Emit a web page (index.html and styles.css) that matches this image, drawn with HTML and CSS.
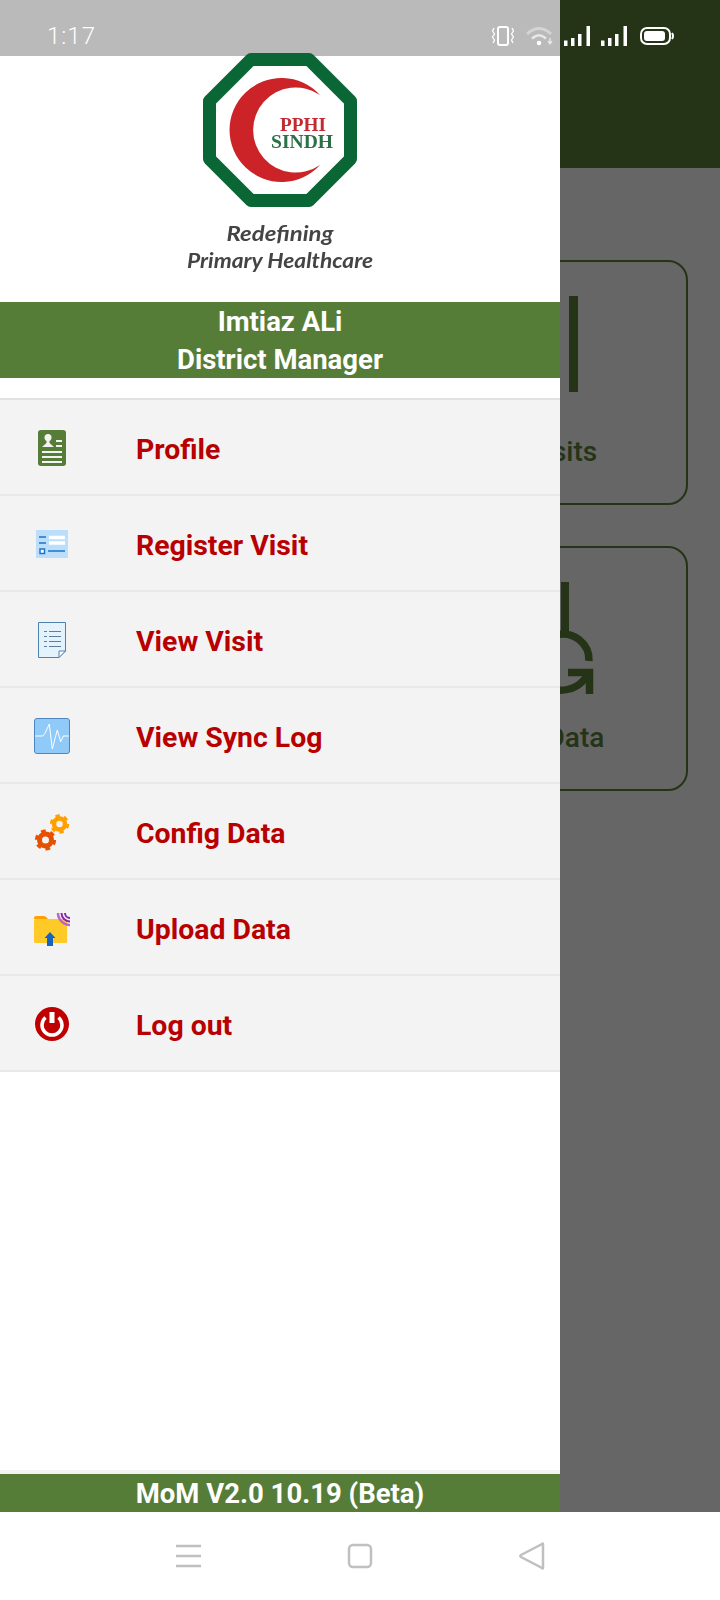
FILE: index.html
```html
<!DOCTYPE html>
<html>
<head>
    <title>MoM</title>
    <link rel="stylesheet" href="styles.css">
</head>
<body>
<div class="screen">

    <div class="app">
        <div class="app-header"></div>
        <div class="cards">
            <div class="card">
                <svg class="card-icon" viewBox="0 0 160 110"><rect x="121" y="8" width="9" height="96"/></svg>
                <div class="card-label">View Visits</div>
            </div>
            <div class="card">
                <svg class="card-icon" viewBox="0 0 160 110">
                    <rect x="113" y="8" width="8" height="50"/>
                    <path class="card-stroke" d="M108 61A26 26 0 0 1 141 87"/>
                    <path class="card-stroke" d="M120 98.500H141.500V120"/>
                    <path class="card-stroke" d="M108 116Q128 118 139 102"/>
                </svg>
                <div class="card-label">Upload Data</div>
            </div>
        </div>
    </div>

    <div class="navbar">
        <svg class="nav-icon nav-menu" viewBox="0 0 26 24"><path d="M0 2H25M0 12H25M0 22H25"/></svg>
        <svg class="nav-icon nav-home" viewBox="0 0 26 26"><rect x="2" y="2" width="22" height="22" rx="4"/></svg>
        <svg class="nav-icon nav-back" viewBox="0 0 28 28"><path d="M25 2V26Q25 27 24 26L3 15Q1.500 14 3 13L24 2Q25 1 25 2Z"/></svg>
    </div>

    <!-- drawer lies over the app -->
    <div class="drawer">
        <div class="drawer-status"></div>
        <div class="drawer-logo">
            <svg class="logo" viewBox="0 0 200 226">
                <path class="logo-ring" d="M71 6.500H129L170.500 48V106L129 147.500H71L29.500 106V48Z"/>
                <path class="logo-moon" d="M140 42A52 52 0 1 0 140 112A42.600 42.600 0 1 1 140 42Z"/>
                <text class="logo-pphi" x="123" y="78" text-anchor="middle" textLength="46" lengthAdjust="spacingAndGlyphs">PPHI</text>
                <text class="logo-sindh" x="122" y="95" text-anchor="middle" textLength="62" lengthAdjust="spacingAndGlyphs">SINDH</text>
                <text class="logo-tag" x="100" y="188" text-anchor="middle" textLength="107" lengthAdjust="spacingAndGlyphs">Redefining</text>
                <text class="logo-tag" x="100" y="215" text-anchor="middle" textLength="186" lengthAdjust="spacingAndGlyphs">Primary Healthcare</text>
            </svg>
        </div>
        <div class="user-band">
            <div>Imtiaz ALi</div>
            <div>District Manager</div>
        </div>

        <div class="menu">
            <div class="menu-item">
                <svg class="menu-icon" viewBox="0 0 40 40">
                    <rect x="6" y="3" width="28" height="36" rx="3" fill="#567d38"/>
                    <circle cx="16" cy="10.500" r="3.500" fill="#f3f3f3"/>
                    <path d="M14.500 13H17.500V16L22 20H10L14.500 16Z" fill="#f3f3f3"/>
                    <path d="M24 14H30M24 19H30M10 25H30M10 30H30M10 35H30" stroke="#f3f3f3" stroke-width="2.200" fill="none"/>
                </svg>
                <span>Profile</span>
            </div>
            <div class="menu-item">
                <svg class="menu-icon" viewBox="0 0 40 40">
                    <rect x="4" y="7" width="32" height="28" fill="#bbdefb"/>
                    <path d="M7 14H14M7 20H14M16 28H33" stroke="#1e74c8" stroke-width="1.500" fill="none"/>
                    <path d="M17 14.500H33M17 20H33" stroke="#fff" stroke-width="3.500" fill="none"/>
                    <rect x="8" y="26" width="4.500" height="4.500" fill="#fff" stroke="#1e74c8" stroke-width="1.500"/>
                </svg>
                <span>Register Visit</span>
            </div>
            <div class="menu-item">
                <svg class="menu-icon" viewBox="0 0 40 40">
                    <path d="M6.500 3.500H33.500V32L27 38.500H6.500Z" fill="#e3f2fd" stroke="#4f81b0" stroke-width="1"/>
                    <path d="M33.500 32H27V38.500Z" fill="#fff" stroke="#4f81b0" stroke-width="1"/>
                    <path d="M12 12.500H15M17 12.500H29M12 17.500H15M17 17.500H29M12 22.500H15M17 22.500H29M12 27.500H15M17 27.500H29" stroke="#5c7f9f" stroke-width="1" fill="none"/>
                </svg>
                <span>View Visit</span>
            </div>
            <div class="menu-item">
                <svg class="menu-icon" viewBox="0 0 40 40">
                    <rect x="2.500" y="3.500" width="35" height="35" rx="2.500" fill="#90caf9" stroke="#4f86bd" stroke-width="1"/>
                    <path d="M3 21H10.700L13 18.300L17.300 9L20.300 34L25.300 15L28.700 26.700L31.300 21H37" stroke="#fff" stroke-width="1" fill="none"/>
                </svg>
                <span>View Sync Log</span>
            </div>
            <div class="menu-item">
                <svg class="menu-icon" viewBox="0 0 40 40">
                    <circle cx="27.500" cy="13" r="5.500" fill="none" stroke="#ffa000" stroke-width="4.500"/>
                    <circle cx="27.500" cy="13" r="8.300" fill="none" stroke="#ffa000" stroke-width="2.800" stroke-dasharray="4.350 4.350"/>
                    <circle cx="13.500" cy="29" r="6" fill="none" stroke="#e65100" stroke-width="5"/>
                    <circle cx="13.500" cy="29" r="9.200" fill="none" stroke="#e65100" stroke-width="2.800" stroke-dasharray="4.800 4.830"/>
                </svg>
                <span>Config Data</span>
            </div>
            <div class="menu-item">
                <svg class="menu-icon" viewBox="0 0 40 40">
                    <path d="M2 11Q2 9 4 9H12Q14 9 16 12H2Z" fill="#ffa000"/>
                    <rect x="2" y="12" width="33" height="24" rx="1.500" fill="#ffca28"/>
                    <path d="M26 6A12 12 0 0 0 38 18" stroke="#ba68c8" stroke-width="2.500" fill="none"/>
                    <path d="M29.500 6A8.500 8.500 0 0 0 38 14.500M33 6A5 5 0 0 0 38 11" stroke="#8e24aa" stroke-width="2" fill="none"/>
                    <path d="M18 25L23.500 31H21V39H15V31H12.500Z" fill="#1565c0"/>
                </svg>
                <span>Upload Data</span>
            </div>
            <div class="menu-item">
                <svg class="menu-icon" viewBox="0 0 40 40">
                    <circle cx="20" cy="21" r="17" fill="#c00000"/>
                    <path d="M13.500 14.500A10 10 0 1 0 26.500 14.500" stroke="#fff" stroke-width="3.500" fill="none"/>
                    <path d="M20 9V20" stroke="#fff" stroke-width="5" fill="none"/>
                </svg>
                <span>Log out</span>
            </div>
        </div>

        <div class="version">MoM V2.0 10.19 (Beta)</div>
    </div>

    <!-- status bar runs over both drawer and app -->
    <div class="statusbar">
        <span class="clock">1:17</span>
        <div class="status-icons">
            <svg class="ic-vibrate" width="24" height="20" viewBox="0 0 24 20">
                <rect x="7" y="1" width="10" height="18" rx="2" fill="none" stroke="#fff" stroke-width="2"/>
                <path d="M3 2L1.500 5L3.500 8L1.500 11L3.500 14L2 17M21 2L22.500 5L20.500 8L22.500 11L20.500 14L22 17" fill="none" stroke="#fff" stroke-width="1.300"/>
            </svg>
            <svg class="ic-wifi" width="28" height="20" viewBox="0 0 28 20">
                <path d="M1 8Q13 -3 25 8" fill="none" stroke="#d4d4d4" stroke-width="3"/>
                <path d="M6 12.500Q13 6 20 12.500" fill="none" stroke="#e8e8e8" stroke-width="2.500"/>
                <circle cx="13" cy="17" r="2.300" fill="#fff"/>
                <path d="M24 12V17M22 15L24 18L26 15" fill="none" stroke="#eee" stroke-width="1.200"/>
            </svg>
            <svg class="ic-signal" width="27" height="20" viewBox="0 0 27 20"><path d="M0 14.500H3.500V20H0ZM7 12H10.500V20H7ZM14 8H17.500V20H14ZM22.500 0H26V20H22.500Z" fill="#fff"/></svg>
            <svg class="ic-signal" width="27" height="20" viewBox="0 0 27 20"><path d="M0 14.500H3.500V20H0ZM7 12H10.500V20H7ZM14 8H17.500V20H14ZM22.500 0H26V20H22.500Z" fill="#fff"/></svg>
            <svg class="ic-battery" width="34" height="18" viewBox="0 0 34 18">
                <rect x="1" y="1" width="29" height="16" rx="6" fill="none" stroke="#fff" stroke-width="2"/>
                <rect x="4" y="4" width="21" height="10" rx="3" fill="#fff"/>
                <path d="M32 6Q34 9 32 12" fill="none" stroke="#fff" stroke-width="2"/>
            </svg>
        </div>
    </div>

</div>
</body>
</html>
```

FILE: styles.css
```css
html, body {
    margin: 0;
    padding: 0;
}
body {
    width: 720px;
    height: 1600px;
    overflow: hidden;
    font-family: Roboto, sans-serif;
}
.screen {
    position: relative;
    width: 720px;
    height: 1600px;
    display: flex;
    flex-direction: column;
}

/* app behind the drawer */
.app {
    flex: 1;
    background: #666;
}
.app-header {
    height: 168px;
    background: #253417;
}
.cards {
    display: grid;
    grid-template-columns: 320px 320px;
    justify-content: end;
    grid-auto-rows: 245px;
    row-gap: 41px;
    padding: 92px 32px 0 0;
}
.card {
    grid-column: 2;
    box-sizing: border-box;
    border: 2px solid #253417;
    border-radius: 20px;
    padding-top: 26px;
    display: flex;
    flex-direction: column;
    align-items: center;
}
.card-icon {
    width: 160px;
    height: 110px;
    overflow: visible;
    fill: #253417;
}
.card-stroke {
    fill: none;
    stroke: #253417;
    stroke-width: 7.5;
}
.card-label {
    margin-top: 39px;
    font-size: 28px;
    line-height: 30px;
    font-weight: 500;
    color: #253417;
}

/* bottom nav */
.navbar {
    height: 88px;
    background: #fff;
    display: flex;
    align-items: center;
}
.nav-icon {
    fill: none;
    stroke: #c0c0c0;
    stroke-width: 2.5;
}
.nav-menu {
    width: 26px;
    height: 24px;
    margin-left: 176px;
}
.nav-home {
    width: 26px;
    height: 26px;
    margin-left: 145px;
}
.nav-back {
    width: 28px;
    height: 28px;
    margin-left: 145px;
}

/* drawer */
.drawer {
    position: absolute;
    top: 0;
    left: 0;
    width: 560px;
    height: 1512px;
    background: #fff;
    display: flex;
    flex-direction: column;
}
.drawer-status {
    height: 56px;
    flex: none;
    background: #bababa;
}
.drawer-logo {
    height: 246px;
    flex: none;
    display: flex;
    justify-content: center;
}
.logo {
    display: block;
    width: 200px;
    height: 226px;
    margin-top: -3px;
    filter: blur(0.6px);
}
.logo-ring {
    fill: none;
    stroke: #0a6634;
    stroke-width: 13;
    stroke-linejoin: round;
}
.logo-moon {
    fill: #cb2327;
}
.logo-pphi, .logo-sindh {
    font-family: "Liberation Serif", serif;
    font-weight: bold;
    font-size: 19px;
}
.logo-pphi {
    fill: #c42a32;
}
.logo-sindh {
    fill: #2c7048;
}
.logo-tag {
    font-family: Lato, sans-serif;
    font-style: italic;
    font-weight: 700;
    font-size: 21px;
    fill: #444;
}
.user-band {
    box-sizing: border-box;
    height: 76px;
    flex: none;
    padding-top: 1px;
    background: #567d38;
    color: #fff;
    text-align: center;
    font-size: 27.5px;
    line-height: 38px;
    font-weight: 700;
}
.menu {
    margin-top: 20px;
    border-top: 2px solid #e2e2e2;
}
.menu-item {
    height: 94px;
    background: #f3f3f3;
    border-bottom: 2px solid #e8e8e8;
    display: flex;
    align-items: center;
    font-size: 28.4px;
    font-weight: 700;
    color: #b80000;
}
.menu-item span {
    margin-top: 4px;
}
.menu-icon {
    width: 40px;
    height: 40px;
    margin-left: 32px;
    margin-right: 64px;
    flex: none;
    filter: blur(0.3px);
}
.version {
    margin-top: auto;
    height: 38px;
    border-top: 4px solid #f3f3f3;
    background: #567d38;
    color: #fff;
    text-align: center;
    font-size: 27.5px;
    line-height: 39px;
    font-weight: 700;
}

/* status bar */
.statusbar {
    position: absolute;
    top: 0;
    left: 0;
    width: 720px;
    height: 72px;
    display: flex;
    align-items: center;
    justify-content: space-between;
    color: #fff;
}
.clock {
    margin-left: 47px;
    font-size: 24px;
    font-weight: 300;
    letter-spacing: 1px;
}
.status-icons {
    display: flex;
    align-items: center;
    gap: 10px;
    margin-right: 46px;
}
.status-icons svg {
    display: block;
}
.ic-vibrate {
    margin-right: 1px;
}
.ic-battery {
    margin-left: 2px;
}
```
